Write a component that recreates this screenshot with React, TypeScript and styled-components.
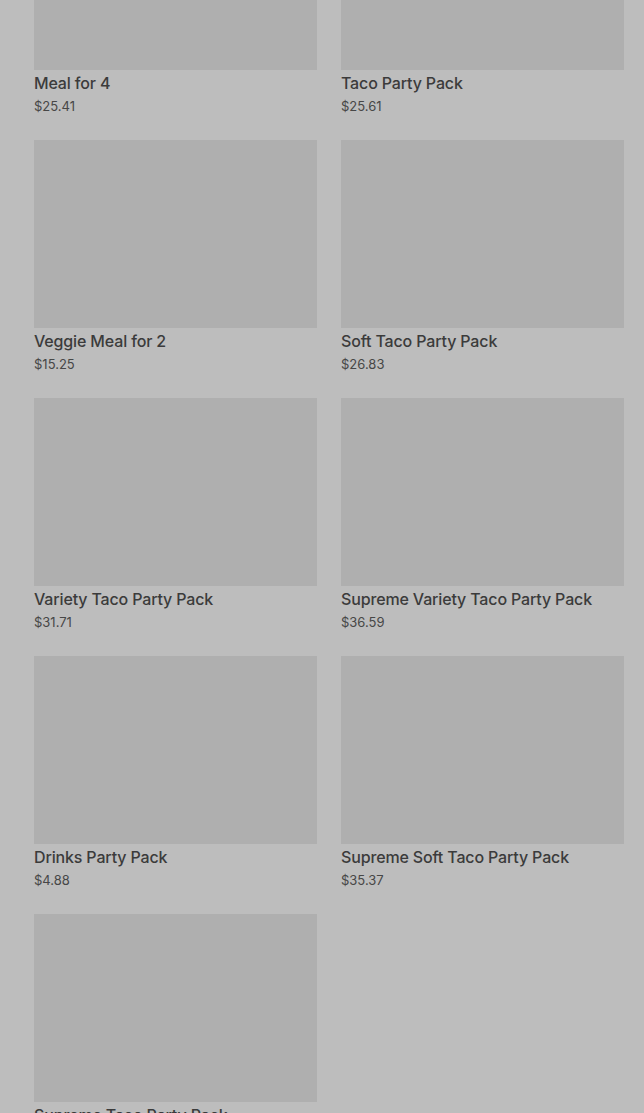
import React from 'react';
import styled, { createGlobalStyle } from 'styled-components';

const GlobalStyle = createGlobalStyle`
  html, body {
    margin: 0;
    padding: 0;
    background: #bdbdbd;
  }
  body {
    font-family: Inter, 'Liberation Sans', sans-serif;
  }
`;

const products = [
  { name: 'Meal for 4', price: 25.41 },
  { name: 'Taco Party Pack', price: 25.61 },
  { name: 'Veggie Meal for 2', price: 15.25 },
  { name: 'Soft Taco Party Pack', price: 26.83 },
  { name: 'Variety Taco Party Pack', price: 31.71 },
  { name: 'Supreme Variety Taco Party Pack', price: 36.59 },
  { name: 'Drinks Party Pack', price: 4.88 },
  { name: 'Supreme Soft Taco Party Pack', price: 35.37 },
  { name: 'Supreme Taco Party Pack', price: 30.49 },
];

function App() {
  return (
    <>
      <GlobalStyle />
      <Page>
        <Grid>
          {products.map((p) => (
            <Card key={p.name}>
              <Thumb />
              <Title>{p.name}</Title>
              <Price>${p.price.toFixed(2)}</Price>
            </Card>
          ))}
        </Grid>
      </Page>
    </>
  );
}

export default App;

const Page = styled.div`
  width: 644px;
  height: 1113px;
  overflow: hidden;
  background: #bdbdbd;
`;

const Grid = styled.div`
  display: grid;
  grid-template-columns: 283px 283px;
  column-gap: 24px;
  row-gap: 25px;
  padding: 0 20px 0 34px;
  margin-top: -118px;
`;

const Card = styled.div`
  display: flex;
  flex-direction: column;
`;

const Thumb = styled.div`
  height: 188px;
  background: #afafaf;
`;

const Title = styled.div`
  margin-top: 3px;
  font-size: 16px;
  line-height: 20px;
  font-weight: 500;
  letter-spacing: -0.15px;
  color: #3b3b3b;
`;

const Price = styled.div`
  margin-top: 4px;
  font-size: 13px;
  line-height: 18px;
  color: #474747;
`;
